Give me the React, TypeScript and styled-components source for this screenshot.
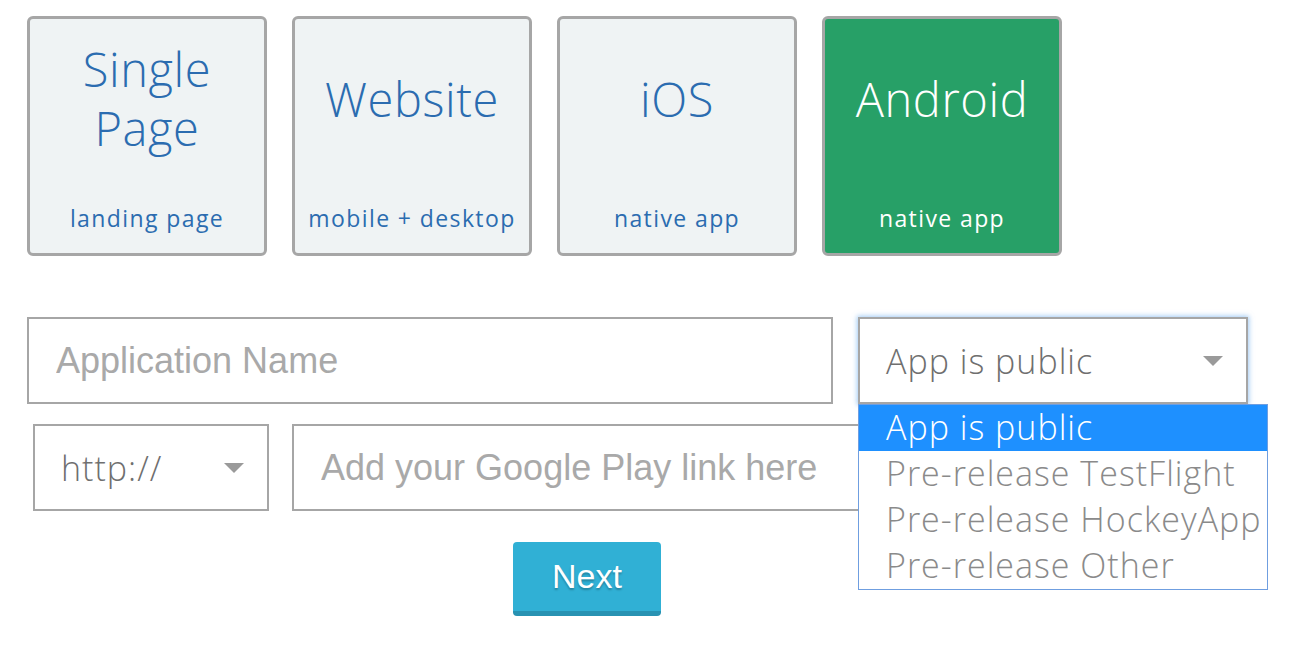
import React from "react";
import styled, { createGlobalStyle } from "styled-components";

const GlobalStyle = createGlobalStyle`
  body {
    margin: 0;
    background: #fff;
    font-family: "Open Sans", "Lato", sans-serif;
  }
`;

const platforms = [
  { title: ["Single", "Page"], sub: "landing page", active: false },
  { title: ["Website"], sub: "mobile + desktop", active: false },
  { title: ["iOS"], sub: "native app", active: false },
  { title: ["Android"], sub: "native app", active: true },
];

const options = [
  "App is public",
  "Pre-release TestFlight",
  "Pre-release HockeyApp",
  "Pre-release Other",
];

const App: React.FunctionComponent = () => {
  return (
    <Page>
      <GlobalStyle />
      <CardRow>
        {platforms.map((p) => (
          <Card key={p.sub + p.title[0]} active={p.active}>
            <CardTitle>
              {p.title.map((line) => (
                <span key={line}>{line}</span>
              ))}
            </CardTitle>
            <CardSub>{p.sub}</CardSub>
          </Card>
        ))}
      </CardRow>

      <FormRow>
        <TextInput width={806} placeholder="Application Name" />
        <SelectWrap>
          <SelectBox focused width={390}>
            <SelectText>App is public</SelectText>
            <Caret />
          </SelectBox>
          <OptionList>
            {options.map((o, idx) => (
              <OptionItem key={o} selected={idx === 0}>
                {o}
              </OptionItem>
            ))}
          </OptionList>
        </SelectWrap>
      </FormRow>

      <FormRow indent>
        <SelectBox width={236}>
          <SelectText>http://</SelectText>
          <Caret />
        </SelectBox>
        <TextInput width={956} placeholder="Add your Google Play link here" />
      </FormRow>

      <ButtonRow>
        <NextButton>Next</NextButton>
      </ButtonRow>
    </Page>
  );
};

const Page = styled.div`
  padding: 16px 0 0 27px;
  position: relative;
`;

const CardRow = styled.div`
  display: flex;
  gap: 25px;
`;

const Card = styled.div<{ active: boolean }>`
  box-sizing: border-box;
  width: 240px;
  height: 240px;
  border: 3px solid #a6a6a6;
  border-radius: 6px;
  background: ${(props) => (props.active ? "#27a067" : "#eff3f4")};
  color: ${(props) => (props.active ? "#ffffff" : "#2b6cb0")};
  display: flex;
  flex-direction: column;
  align-items: center;
`;

const CardTitle = styled.div`
  flex: 1;
  display: flex;
  flex-direction: column;
  justify-content: center;
  align-items: center;
  font-size: 47px;
  font-weight: 300;
  letter-spacing: 0.6px;
  line-height: 59px;
  padding-bottom: 26px;
`;

const CardSub = styled.div`
  font-size: 23px;
  font-weight: 400;
  letter-spacing: 1.4px;
  line-height: 26px;
  margin-bottom: 22px;
`;

const FormRow = styled.div<{ indent?: boolean }>`
  display: flex;
  gap: ${(props) => (props.indent ? "23px" : "25px")};
  margin-top: ${(props) => (props.indent ? "20px" : "61px")};
  margin-left: ${(props) => (props.indent ? "6px" : "0")};
`;

const TextInput = styled.input<{ width: number }>`
  box-sizing: border-box;
  width: ${(props) => props.width}px;
  height: 87px;
  border: 2px solid #a6a6a6;
  padding: 0 27px;
  font-family: "Liberation Sans", Arial, sans-serif;
  font-size: 36px;
  color: #555;
  outline: none;
  background: #fff;
  &::placeholder {
    color: #a9a9a9;
  }
`;

const SelectWrap = styled.div`
  position: relative;
  z-index: 5;
`;

const SelectBox = styled.div<{ width: number; focused?: boolean }>`
  box-sizing: border-box;
  width: ${(props) => props.width}px;
  height: 87px;
  border: 2px solid #a6a6a6;
  background: #fff;
  display: flex;
  align-items: center;
  justify-content: space-between;
  padding: 0 23px 0 26px;
  box-shadow: ${(props) =>
    props.focused ? "0 0 5px 1px rgba(120, 180, 240, 0.7)" : "none"};
`;

const SelectText = styled.span`
  font-size: 34px;
  font-weight: 300;
  letter-spacing: 1px;
  color: #6f6f6f;
`;

const Caret = styled.i`
  width: 0;
  height: 0;
  border-left: 10px solid transparent;
  border-right: 10px solid transparent;
  border-top: 10px solid #9a9a9a;
`;

const OptionList = styled.ul`
  position: absolute;
  top: 87px;
  left: 0;
  width: 410px;
  box-sizing: border-box;
  margin: 0;
  padding: 0;
  list-style: none;
  background: #fff;
  border: 1px solid #6f9ee0;
`;

const OptionItem = styled.li<{ selected: boolean }>`
  height: 46px;
  line-height: 44px;
  padding-left: 27px;
  font-size: 34px;
  font-weight: 300;
  letter-spacing: 1px;
  white-space: nowrap;
  background: ${(props) => (props.selected ? "#1e90ff" : "#fff")};
  color: ${(props) => (props.selected ? "#fff" : "#8a8a8a")};
`;

const ButtonRow = styled.div`
  margin-top: 31px;
  padding-left: 486px;
`;

const NextButton = styled.button`
  width: 148px;
  height: 74px;
  border: none;
  border-bottom: 5px solid #2892b2;
  border-radius: 4px;
  background: #30b0d5;
  color: #fff;
  font-family: "Liberation Sans", Arial, sans-serif;
  font-size: 34px;
  text-shadow: 0 2px 2px rgba(0, 0, 0, 0.25);
  cursor: pointer;
`;

export default App;
